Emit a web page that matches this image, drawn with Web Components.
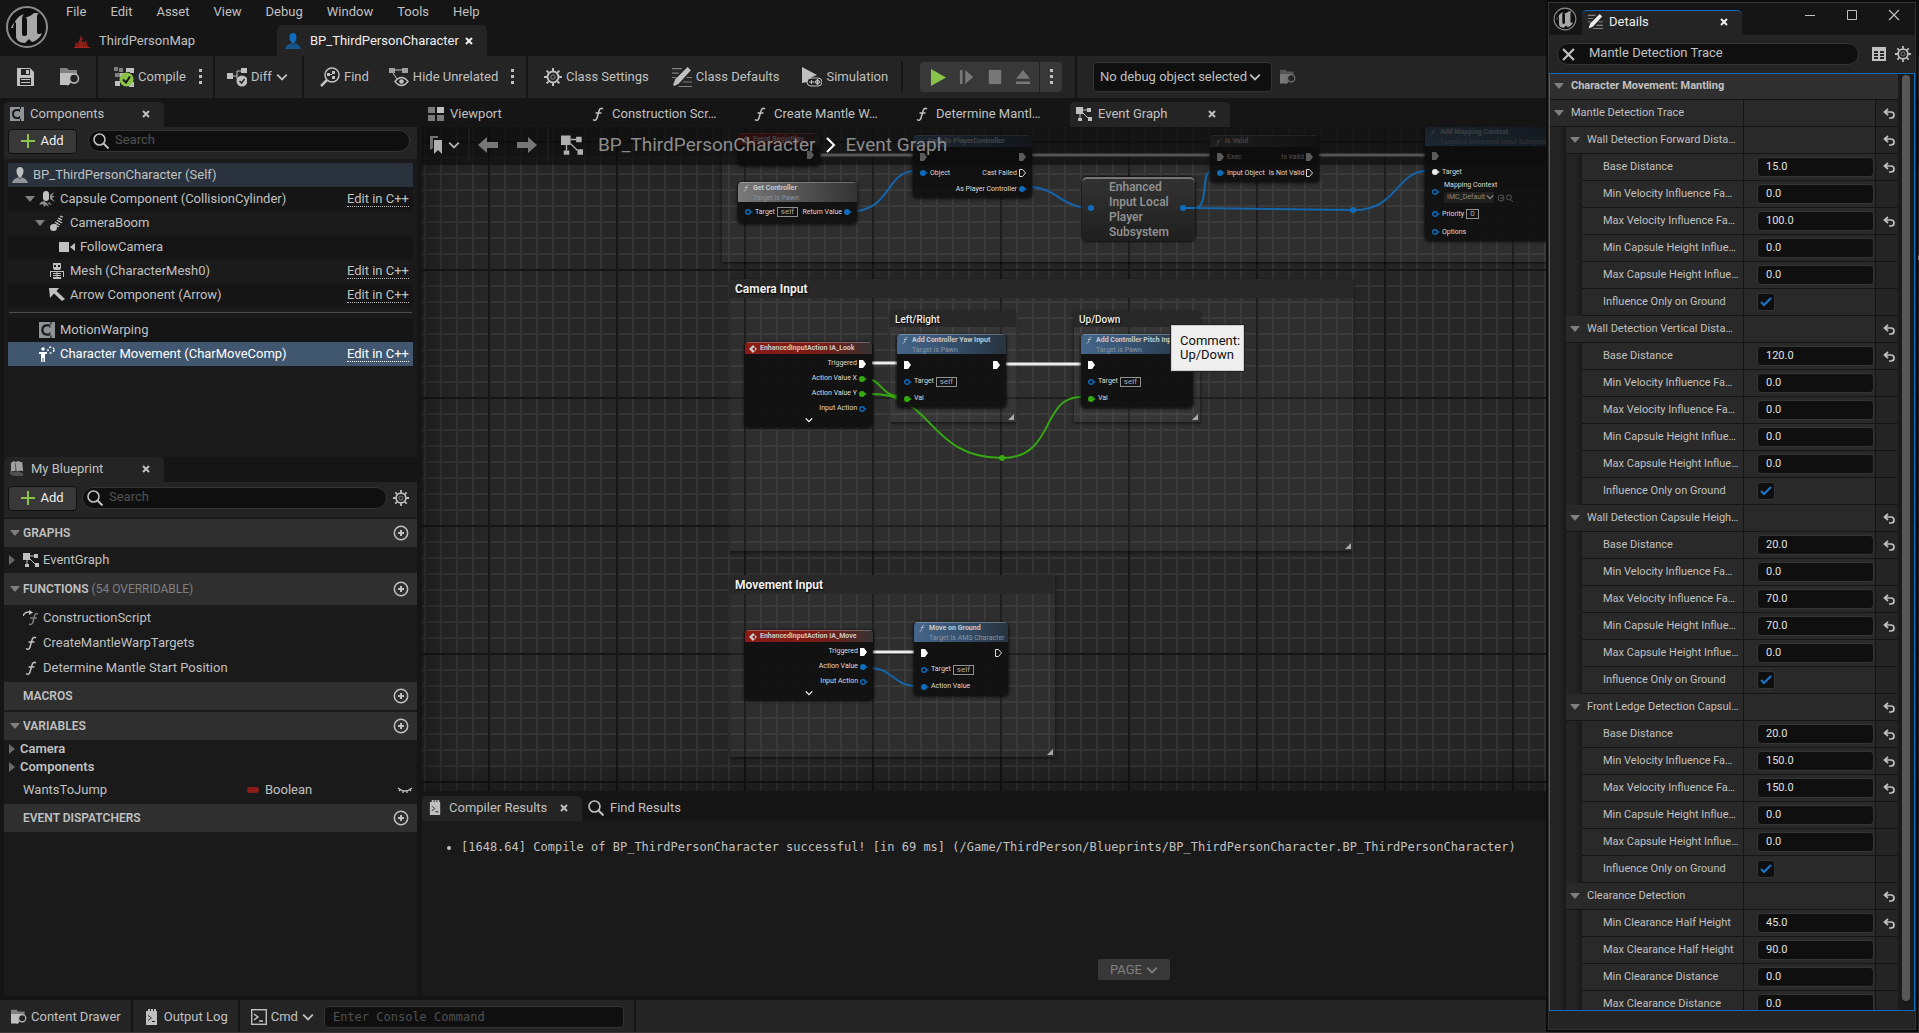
<!DOCTYPE html>
<html lang="en">
<head>
<meta charset="utf-8">
<title>BP_ThirdPersonCharacter</title>
<style>
  html, body { height: 100%; }
  body {
    margin: 0;
    overflow: hidden;
    background: #151515;
    color: #c0c0c0;
    font: 13px/16px Roboto, "Liberation Sans", sans-serif;
    --panel: #1a1a1a;
    --header: #242424;
    --line: #151515;
    --blue: #0f6cbd;
  }
</style>
</head>
<body>
<bp-editor></bp-editor>

<script>
const ICONS = {
  logo: ['0 0 44 44', `<circle cx="22" cy="22" r="20" fill="#101010" stroke="#8c8c8c" stroke-width="2"/><path fill="#a8a8a8" d="M8 23c1-7 5-12 11-14-2 2-2 4-2 6v14c0 2 3 3 5 1V15c0-2-1-2-2-2 3-1 7-3 9-5h5c-2 1-2 3-2 5v14c0 2 2 3 5 1-2 5-6 8-10 9l-3-3-4 4c-6 0-9-3-9-7V18c0-2-3 0-5 5z"/>`],
  map: ['0 0 16 16', `<path fill="#8b1e16" d="M1 14 2 9l2 2 3-9 2 5 1 3 2-3 2 7z"/><path fill="#151515" d="M3 12h1v1H3zM8 7h1v2H8zM11 11h1v1h-1z"/><path fill="#a3271c" d="M0 14h16v1H0z"/>`],
  person: ['0 0 16 16', `<path d="M4.500 4C4.500 1.500 6 0 8 0s3.500 1.500 3.500 4c0 2-.8 4-1.800 5v1l-1.700 1-1.700-1V9c-1-1-1.800-3-1.800-5z"/><path opacity=".7" d="M6.300 10.500 8 12l1.700-1.500c3 .5 5.300 2 6.300 5.500H0c1-3.500 3.300-5 6.300-5.500z"/>`],
  save: ['0 0 18 18', `<path fill-rule="evenodd" d="M1 0h13l4 4v14H1zM5 1v6h9V1zM4 10v7h11v-7z"/><path d="M10 2h3v4h-3zM5 11h9v1H5zM5 14h9v1H5z"/>`],
  browse: ['0 0 20 18', `<path opacity=".6" d="M0 0h7l2 2h8v3H0z"/><path d="M0 5h17v1a6 6 0 0 0-7 9l-1 2H0z"/><circle cx="14" cy="10.500" r="4.500" fill="none" stroke="currentColor" stroke-width="1.500"/><path d="m10.500 13-3.500 4" stroke="currentColor" stroke-width="2"/>`],
  compile: ['0 0 20 20', `<path opacity=".6" d="M0 0h4v4H0zM5 1h4v4H5zM1 6h5v4H1z"/><path d="M12 1h4v4h-4zM16 1h4v5h-4zM6 6h4v4H6zM1 14h5v5H1zM15 15h5v5h-5z"/><circle cx="12.500" cy="12.500" r="7" fill="#8bc34a"/><path d="m9 12.500 3 3 4-6" fill="none" stroke="#151515" stroke-width="2"/>`],
  diff: ['0 0 20 20', `<path d="M0 6h6v6H0zM14 1h6v5h-6z"/><path d="M6 9h4V4h4M10 9v3" fill="none" stroke="currentColor"/><circle cx="15" cy="14" r="5.500"/><path d="m12.500 14 2 2 3-4" fill="none" stroke="#242424" stroke-width="1.500"/>`],
  find: ['0 0 20 20', `<circle cx="12" cy="8" r="7" fill="none" stroke="currentColor" stroke-width="1.500"/><path d="m7 13-6 6" stroke="currentColor" stroke-width="2.500"/><path d="M7 6h3v3H7zM12 4h3v3h-3zM12 9h3v3h-3zM10 7h2v1h-2z"/>`],
  hide: ['0 0 20 20', `<path opacity=".8" d="M0 1h6v5H0zM13 1h6v5h-6z"/><path d="M6 3h7M4 6l4 6" stroke="currentColor"/><path fill="#242424" stroke="currentColor" stroke-width="1.500" d="M6 14.500q6.500-8 13 0-6.500 8-13 0z"/><circle cx="12.500" cy="14.500" r="2.300"/>`],
  gear: ['0 0 18 18', `<circle cx="9" cy="9" r="5.500" fill="none" stroke="currentColor" stroke-width="2"/><circle cx="9" cy="9" r="2.200" fill="none" stroke="currentColor" opacity=".6"/><path stroke="currentColor" stroke-width="2" d="M9 0v3M9 15v3M0 9h3M15 9h3M2.600 2.600l2 2M13.400 13.400l2 2M2.600 15.400l2-2M13.400 4.600l2-2"/>`],
  defaults: ['0 0 18 18', `<path opacity=".6" d="M0 1h9v1H0zM0 5h6v1H0zM0 9h4v1H0zM13 9h5v1h-5zM10 13h8v1h-8zM6 17h12v1H6z"/><path d="M14 0 17 3 6 15l-4 2-1-1 2-5z"/>`],
  sim: ['0 0 20 20', `<path d="M0 0l15 8-5 2-4 5-6 1z"/><rect x="5" y="11" width="15" height="8" rx="4" fill="#242424" stroke="currentColor"/><circle cx="15.500" cy="15" r="2" fill="none" stroke="currentColor"/><path d="M7 15h5M9.500 13v4M15.500 12v6M12.500 15h6" stroke="currentColor"/>`],
  play: ['0 0 16 18', `<path fill="#8bc34a" d="M0 0l16 9-16 9z"/>`],
  step: ['0 0 16 18', `<path d="M0 1h3v16H0zM6 1l9 8-9 8z"/>`],
  stop: ['0 0 16 18', `<path d="M1 1h14v16H1z"/>`],
  eject: ['0 0 16 18', `<path d="M8 1l8 10H0zM0 14h16v3H0z"/>`],
  dots: ['0 0 4 16', `<path d="M1 0h3v3H1zM1 6h3v3H1zM1 12h3v3H1z"/>`],
  chevron: ['0 0 10 10', `<path d="M1 3l4 4 4-4" fill="none" stroke="currentColor" stroke-width="1.500"/>`],
  close: ['0 0 8 8', `<path d="M1 1l6 6M7 1 1 7" stroke="currentColor" stroke-width="2"/>`],
  comp: ['0 0 14 14', `<path fill="#8f9496" d="M0 0h14v14H0z"/><path d="M9 3H7Q3 3 3 7t4 4h2" fill="none" stroke="#1a1a1a" stroke-width="2"/><path fill="#1a1a1a" d="M9 2h1v3H9zM9 9h1v3H9zM10 0h1v2h-1zM10 12h1v2h-1z"/>`],
  plus: ['0 0 14 14', `<path fill="#8bc34a" d="M6 0h2v6h6v2H8v6H6V8H0V6h6z"/>`],
  search: ['0 0 16 16', `<circle cx="6.500" cy="6.500" r="5.500" fill="none" stroke="currentColor" stroke-width="1.600"/><path d="m10.500 10.500 5 5" stroke="currentColor" stroke-width="2"/>`],
  capsule: ['0 0 16 16', `<rect x="4" y="0" width="6" height="10" rx="3"/><path opacity=".7" d="M0 14l2-3 3-1 3 2 2 4-3-2-2 2-1-3zM11 4l4-3-2 4 3 0-3 2 3 4-5-3zM10 11l3 3-4-1z"/>`],
  boom: ['0 0 16 16', `<circle cx="4.500" cy="12.500" r="3.500"/><path d="m5 9 5 3M6 7l5 3M8 5l5 3M9 3l4 2M11 1l3 1" fill="none" stroke="currentColor" stroke-width="1.300"/><path d="M7 10 13 1" stroke="currentColor" opacity=".6"/>`],
  camera: ['0 0 16 16', `<path d="M0 3h10v10H0zM11 8l5-4v8z"/>`],
  mesh: ['0 0 16 16', `<path fill-rule="evenodd" d="M4 0h8v5l-1 2H5L4 5zM5 2v2h2V2zM9 2v2h2V2z"/><path d="M1 8h14v1H1zM1 8h1v6H1zM14 8h1v6h-1zM7.500 8h1v8h-1zM4 10h8v1H4zM4 12h8v1H4zM4 14h8v2H4z"/>`],
  arrow: ['0 0 16 16', `<path d="M0 1h10L7.500 4 16 12l-3 2-8-7.500L1 11z"/>`],
  charmove: ['0 0 16 16', `<circle cx="4" cy="3" r="1.800"/><path d="M0 6h8v2H6v8H4.500v-4h-1v4H2V8H0z"/><circle cx="12" cy="4" r="3" fill="none" stroke="currentColor" stroke-dasharray="2 2" stroke-width="1.500"/>`],
  book: ['0 0 16 16', `<path fill="#a0a0a0" d="M1 2l3-2 2 1 3-1 2 1 2 0 1 10-3-1-2 1-3-1-2 1-3 0z"/><path fill="#505050" d="M0 10l4 2 4-1 6 2v3H4l-4-2zM5 2l1 8h1L6 2z"/>`],
  graph: ['0 0 16 16', `<path d="M0 1h7v7H0zM11 2h4v4h-4zM2 12h4v3H2zM12 11h4v4h-4z"/><path d="M7 4h4M4 8v4M7 7l5 5" stroke="currentColor" fill="none"/>`],
  func: ['0 0 12 16', `<path d="M11 3C9 1.500 7.500 3 7 5L5 12c-.5 2-2 3-4 1.500M3.500 7h6" fill="none" stroke="currentColor" stroke-width="1.500"/>`],
  cfunc: ['0 0 16 16', `<path d="M0 6c1-3 4-4 6-4" fill="none" stroke="currentColor" stroke-width="1.500"/><path d="M6 0l4 2.500L6 5z"/><path opacity=".6" d="M15 4c-2-1-3 0-3.500 2L10 12c-.5 2-2 3-4 2M7 8h7" fill="none" stroke="currentColor" stroke-width="1.500"/>`],
  viewport: ['0 0 16 14', `<path opacity=".6" d="M0 0h7v6H0zM0 8h7v6H0zM9 8h7v6H9z"/><path d="M9 0h7v6H9z"/>`],
  add: ['0 0 16 16', `<circle cx="8" cy="8" r="6.700" fill="none" stroke="currentColor" stroke-width="1.500"/><path d="M7 5h2v2h2v2H9v2H7V9H5V7h2z"/>`],
  eye: ['0 0 16 16', `<path d="M1 6q7 6 14 0M2 9l1-1M6 11V9M10 11V9M14 9l-1-1" fill="none" stroke="currentColor" stroke-width="1.300"/>`],
  log: ['0 0 16 16', `<path fill-rule="evenodd" d="M2 2h2V0h2v2h1V0h2v2h1V0h2v2h1v14H2zM4 6v1l3 2-3 2v1l4-3zM8 12v1h3v-1z"/>`],
  cmd: ['0 0 16 16', `<rect x=".7" y=".7" width="14.600" height="14.600" fill="none" stroke="currentColor" stroke-width="1.400"/><path d="m3 5 4 3-4 3M8 12h4" fill="none" stroke="currentColor" stroke-width="1.400"/>`],
  bookmark: ['0 0 12 18', `<path opacity=".6" d="M0 0h8v2H3v10l-3 2z"/><path d="M4 4h8v14l-4-4-4 4z"/>`],
  back: ['0 0 20 16', `<path d="M0 8l9-8v5h11v6H9v5z"/>`],
  forward: ['0 0 20 16', `<path d="M20 8l-9-8v5H0v6h11v5z"/>`],
  crumb: ['0 0 10 16', `<path d="M1 1l7 7-7 7" fill="none" stroke="#fff" stroke-width="2"/>`],
  min: ['0 0 12 12', `<path d="M1 6h10v1H1z"/>`],
  max: ['0 0 12 12', `<path d="M1.500 1.500h9v9h-9z" fill="none" stroke="currentColor"/>`],
  x: ['0 0 12 12', `<path d="M1 1l10 10M11 1 1 11" stroke="currentColor" stroke-width="var(--w, 1.200)"/>`],
  table: ['0 0 14 14', `<path fill-rule="evenodd" d="M0 0h14v14H0zM2 4v2h4V4zM8 4v2h4V4zM2 7v2h4V7zM8 7v2h4V7zM2 10v2h4v-2zM8 10v2h4v-2z"/>`],
  reset: ['0 0 12 12', `<path d="M5 1 1.500 4 5 7M2 4h6q3 0 3 3t-3 3H6" fill="none" stroke="currentColor" stroke-width="1.700"/>`],
  down: ['0 0 10 6', `<path fill="#808080" d="M0 0h10L5 6z"/>`],
  right: ['0 0 6 10', `<path fill="#6a6a6a" d="M0 0l6 5-6 5z"/>`],
  event: ['0 0 8 8', `<path d="M4 0l4 4-4 4-4-4z"/><path fill="#8b1a14" d="M3 4l3-2v4z"/>`],
  asset: ['0 0 18 8', `<g fill="none" stroke="#555"><circle cx="4" cy="4" r="3"/><path d="M6 4H3"/><circle cx="12" cy="3.500" r="2.500"/><path d="m14 6 2 2"/></g>`],
  grip: ['0 0 6 6', `<path d="M6 0v6H0z"/>`]
};

// Every element of the editor renders its own template once it is connected
class UiElement extends HTMLElement {
  connectedCallback() {
    if (this.shadowRoot) return;
    this.attachShadow({mode: 'open'}).innerHTML = `
      <style>
        * { box-sizing: border-box; }
        :host([hidden]) { display: none; }
        button, input, select { font: inherit; color: inherit; }
        button { border: 0; padding: 0; background: none; display: flex; align-items: center; }
      </style>` + this.render();
  }
  attr(name, other = '') {
    return this.hasAttribute(name) ? this.getAttribute(name) : other;
  }
}

class UiIcon extends UiElement {
  render() {
    const [box, shape] = ICONS[this.attr('name')];
    const w = this.attr('w', 16);
    const h = this.attr('h', w);
    return `
      <style>
        :host { display: inline-flex; flex: none; }
        svg { display: block; fill: currentColor; }
      </style>
      <svg width="${w}" height="${h}" viewBox="${box}" aria-hidden="true">${shape}</svg>`;
  }
}

// Tab with an icon; "active" lights it up and shows the close button
class UiTab extends UiElement {
  render() {
    return `
      <style>
        :host { display: flex; align-items: center; height: 25px; padding: 0 6px 2px; width: 160px; border-radius: 5px 5px 0 0; box-sizing: border-box; }
        :host([active]) { background: var(--header); }
        :host([big]) { height: 31px; padding: 0 8px; width: 210px; }
        .tab { flex: 1; gap: 6px; white-space: nowrap; text-align: left; }
        :host([big]) .tab { gap: 9px; }
        :host([big][active]) { color: #eee; }
        .close { padding: 4px 8px; }
        :host([big]) .close { padding: 4px 6px 4px 0; }
      </style>
      <button class="tab" role="tab"><slot name="icon"></slot><span><slot></slot></span></button>
      ${this.hasAttribute('active') ? '<button class="close" aria-label="Close tab"><ui-icon name="close" w="8"></ui-icon></button>' : ''}`;
  }
}

class UiTool extends UiElement {
  render() {
    const size = this.attr('size', 20);
    return `
      <style>
        :host { display: flex; }
        button { gap: 4px; white-space: nowrap; }
      </style>
      <button aria-label="${this.attr('label')}">
        ${this.hasAttribute('icon') ? `<ui-icon name="${this.attr('icon')}" w="${size}"></ui-icon>` : ''}
        <slot></slot>
        ${this.hasAttribute('menu') ? '<ui-icon name="chevron" w="12"></ui-icon>' : ''}
      </button>`;
  }
}

class UiSearch extends UiElement {
  render() {
    return `
      <style>
        :host { display: block; flex: 1; min-width: 0; }
        label { display: flex; align-items: center; gap: var(--gap, 6px); height: 22px; padding: 0 5px 0 4px; border: 1px solid #343434; border-radius: 11px; background: #0f0f0f; }
        input { flex: 1; min-width: 0; border: 0; padding: 0 0 2px; background: none; outline: 0; }
        input::placeholder { color: #505050; opacity: 1; }
        ui-icon { --w: 2; }
      </style>
      <label><ui-icon name="${this.attr('icon', 'search')}" w="${this.attr('size', 16)}"></ui-icon>
      <input aria-label="Search" placeholder="Search" value="${this.attr('value')}"></label>`;
  }
}

class UiAdd extends UiElement {
  render() {
    return `
      <style>
        :host { display: block; }
        button { gap: 5px; width: 69px; height: 25px; justify-content: center; color: #eee; background: #383838; border: 1px solid #0f0f0f; border-radius: 4px; }
      </style>
      <button><ui-icon name="plus" w="14"></ui-icon>Add</button>`;
  }
}

class TreeRow extends UiElement {
  render() {
    return `
      <style>
        :host { display: flex; align-items: center; height: 24px; gap: 5px; padding: 0 4px 0 calc(4px + var(--depth, 0px)); white-space: nowrap; background: #151515; }
        :host([alt]) { background: #1a1a1a; }
        :host([self]) { background: #2a333d; }
        :host([selected]) { background: #40576f; color: #fff; }
        .twist { width: 10px; display: flex; margin-right: -1px; }
        .name { flex: 1; }
        a { color: inherit; text-decoration: none; line-height: 14px; border-bottom: 1px dotted currentColor; }
      </style>
      ${this.hasAttribute('self') ? '' : `<span class="twist">${this.hasAttribute('open') ? '<ui-icon name="down" w="10" h="6"></ui-icon>' : ''}</span>`}
      <ui-icon name="${this.attr('icon')}" w="${this.attr('size', 16)}"></ui-icon>
      <span class="name"><slot></slot></span>
      ${this.hasAttribute('cpp') ? '<a href="#cpp">Edit in C++</a>' : ''}`;
  }
}

class BpSection extends UiElement {
  render() {
    return `
      <style>
        :host { display: block; }
        header { display: flex; align-items: center; height: var(--h, 28px); padding: 0 8px 0 6px; gap: 3px; background: #2f2f2f; font-size: 12px; }
        b { font-weight: 600; }
        i { font-style: normal; color: #808080; flex: 1; }
        .twist { width: 10px; display: flex; }
      </style>
      <header>
        <span class="twist">${this.hasAttribute('open') ? '<ui-icon name="down" w="10" h="6"></ui-icon>' : ''}</span>
        <b>${this.attr('name')}</b><i>${this.attr('note')}</i>
        <button aria-label="Add to ${this.attr('name')}"><ui-icon name="add" w="16"></ui-icon></button>
      </header>
      <slot></slot>`;
  }
}

class BpItem extends UiElement {
  render() {
    return `
      <style>
        :host { display: flex; align-items: center; gap: 4px; height: 25px; padding: 0 4px 0 5px; white-space: nowrap; }
        .twist { width: 10px; display: flex; }
        :host([bold]) { height: 18px; font-weight: 600; gap: 1px; }
      </style>
      <span class="twist">${this.hasAttribute('closed') ? '<ui-icon name="right" w="6" h="10"></ui-icon>' : ''}</span>
      <slot></slot>`;
  }
}

class ComponentsPanel extends UiElement {
  render() {
    return `
      <style>
        :host { display: flex; flex-direction: column; height: 355px; }
        .bar { display: flex; align-items: center; gap: 11px; height: 32px; padding: 0 7px 4px 4px; background: var(--header); }
        .body { flex: 1; background: var(--panel); padding: 4px 4px 0; }
        hr { margin: 5px 1px; border: 0; height: 1px; background: #4c4c4c; }
      </style>
      <ui-tab active><ui-icon slot="icon" name="comp" w="14"></ui-icon>Components</ui-tab>
      <div class="bar"><ui-add></ui-add><ui-search></ui-search></div>
      <div class="body">
        <tree-row self icon="person">BP_ThirdPersonCharacter (Self)</tree-row>
        <tree-row open icon="capsule" cpp style="--depth: 13px">Capsule Component (CollisionCylinder)</tree-row>
        <tree-row alt open icon="boom" style="--depth: 23px">CameraBoom</tree-row>
        <tree-row icon="camera" style="--depth: 33px">FollowCamera</tree-row>
        <tree-row alt icon="mesh" cpp style="--depth: 23px">Mesh (CharacterMesh0)</tree-row>
        <tree-row icon="arrow" cpp style="--depth: 23px">Arrow Component (Arrow)</tree-row>
        <hr>
        <tree-row icon="comp" style="--depth: 13px">MotionWarping</tree-row>
        <tree-row selected icon="charmove" cpp style="--depth: 13px">Character Movement (CharMoveComp)</tree-row>
      </div>`;
  }
}

class BlueprintPanel extends UiElement {
  render() {
    return `
      <style>
        :host { display: flex; flex-direction: column; flex: 1; min-height: 0; }
        .bar { display: flex; align-items: center; gap: 5px; height: 35px; padding: 0 8px 3px 4px; background: var(--header); }
        .bar ui-icon { margin-left: 1px; }
        .body { flex: 1; background: var(--panel); padding-top: 2px; }
        .list { padding-bottom: 2px; }
        .var { flex: 1; display: flex; align-items: center; }
        .var span { flex: 1; }
        .var i { width: 12px; height: 6px; border-radius: 3px; background: #8b1e16; margin-right: 6px; }
        .type { width: 132px; }
        .gap { height: 2px; }
      </style>
      <ui-tab active><ui-icon slot="icon" name="book" w="15"></ui-icon>My Blueprint</ui-tab>
      <div class="bar"><ui-add></ui-add><ui-search></ui-search>
        <button aria-label="Settings"><ui-icon name="gear" w="16"></ui-icon></button></div>
      <div class="body">
        <bp-section open name="GRAPHS">
          <bp-item closed style="height: 26px"><ui-icon name="graph" w="16"></ui-icon>EventGraph</bp-item>
        </bp-section>
        <bp-section open name="FUNCTIONS" note="(54 OVERRIDABLE)" style="--h: 32px">
          <div class="list">
            <bp-item><ui-icon name="cfunc" w="16"></ui-icon>ConstructionScript</bp-item>
            <bp-item><ui-icon name="func" w="16"></ui-icon>CreateMantleWarpTargets</bp-item>
            <bp-item><ui-icon name="func" w="16"></ui-icon>Determine Mantle Start Position</bp-item>
          </div>
        </bp-section>
        <bp-section name="MACROS"></bp-section>
        <div class="gap"></div>
        <bp-section open name="VARIABLES">
          <bp-item bold closed>Camera</bp-item>
          <bp-item bold closed>Components</bp-item>
          <bp-item style="height: 28px"><div class="var"><span>WantsToJump</span><i></i><div class="type">Boolean</div><button aria-label="Toggle visibility"><ui-icon name="eye" w="16"></ui-icon></button></div></bp-item>
        </bp-section>
        <bp-section name="EVENT DISPATCHERS"></bp-section>
      </div>`;
  }
}

const PIN_SHAPES = {
  exec: '<path fill="#fff" d="M0 0h4l3 4-3 4H0z"/>',
  'exec-o': '<path fill="none" stroke="#ddd" d="M.5.5h3l3 3.500-3 3.500h-3z"/>',
  dot: '<circle cx="3" cy="4" r="3"/><path d="M6 3l2 1-2 1z"/>',
  ring: '<circle cx="3" cy="4" r="2.300" fill="none" stroke="currentColor" stroke-width="1.400"/><path d="M6 3l2 1-2 1z"/>'
};
const PIN_COLORS = {blue: '#0f6cbd', green: '#35a910', white: '#eee', exec: '#fff'};

// One line of a node: an input on the left, an output on the right.
// in / out hold the pin as "shape color", in-label / out-label the text.
class NodeRow extends UiElement {
  pin(value) {
    if (!value) return '';
    const [shape, color = 'exec'] = value.split(' ');
    return `<svg width="8" height="8" viewBox="0 0 8 8" style="color: ${PIN_COLORS[color]}" fill="currentColor">${PIN_SHAPES[shape]}</svg>`;
  }
  render() {
    return `
      <style>
        :host { display: flex; align-items: center; height: var(--row, 17px); padding: 0 5px 0 7px; gap: 2px; font-size: 7px; line-height: 9px; color: #ddd; white-space: nowrap; }
        svg { flex: none; display: block; }
        .space { flex: 1; }
        .box { border: 1px solid #909090; padding: 0 3px; color: #aaa; height: 10px; line-height: 8px; font-size: 8px; }
      </style>
      ${this.pin(this.attr('in'))}<span>${this.attr('in-label')}</span>
      ${this.hasAttribute('box') ? `<span class="box">${this.attr('box')}</span>` : ''}
      <slot></slot><span class="space"></span>
      <span>${this.attr('out-label')}</span>${this.pin(this.attr('out'))}`;
  }
}

class GraphNode extends UiElement {
  render() {
    this.style.cssText += `left:${this.attr('x')}px;top:${this.attr('y')}px;width:${this.attr('w')}px;min-height:${this.attr('h')}px`;
    const colors = {event: '#8b1a14, #7a1b16 60%, #333', func: '#45668a, #34506e 50%, #27323d', pure: '#7a7a7a, #555 50%, #333', plain: '#484848, #333 60%, #222'};
    return `
      <style>
        :host { position: absolute; display: flex; flex-direction: column; box-sizing: border-box; background: #101010ee; border-radius: 4px; box-shadow: 0 1px 3px 1px #000a; overflow: hidden; }
        header { flex: none; padding: 0 4px; height: ${this.hasAttribute('sub') ? 20 : 12}px; background: linear-gradient(90deg, ${colors[this.attr('kind', 'func')]}); border-top: 1px solid #ffffff44; display: grid; grid-template-columns: 8px 1fr; column-gap: 3px; align-items: center; font-size: 7px; line-height: 9px; color: #c8c8c8; white-space: nowrap; }
        b { font-weight: 700; }
        small { grid-column: 2; font-size: 7px; line-height: 8px; color: #8a949c; }
        .body { padding-top: 2px; }
        footer { text-align: center; height: 10px; display: flex; justify-content: center; color: #fff; }
      </style>
      <header><ui-icon name="${this.attr('icon', 'func')}" w="8"></ui-icon><b>${this.attr('name')}</b>${this.hasAttribute('sub') ? `<small>${this.attr('sub')}</small>` : ''}</header>
      <div class="body"><slot></slot></div>
      ${this.hasAttribute('more') ? '<footer><ui-icon name="chevron" w="8"></ui-icon></footer>' : ''}`;
  }
}

class CompactNode extends UiElement {
  render() {
    this.style.cssText += `left:${this.attr('x')}px;top:${this.attr('y')}px;width:${this.attr('w')}px`;
    return `
      <style>
        :host { position: absolute; display: block; box-sizing: border-box; padding: 1px 27px; white-space: nowrap; font: 600 12px/15px Roboto, sans-serif; color: #8f8f8f; background: linear-gradient(#333d, #1c1c1cdd); border-top: 2px solid #777; border-radius: 5px; box-shadow: 0 0 2px 1px #000a; }
      </style>
      <slot></slot>`;
  }
}

class GraphComment extends UiElement {
  render() {
    this.style.cssText += `left:${this.attr('x')}px;top:${this.attr('y')}px;width:${this.attr('w')}px;height:${this.attr('h')}px`;
    return `
      <style>
        :host { position: absolute; display: flex; flex-direction: column; justify-content: space-between; box-sizing: border-box; background: #ffffff0a; box-shadow: 0 1px 3px #000a; }
        header { background: #282828; color: #eee; font: 700 12px/18px Roboto, sans-serif; padding: 1px 5px 0; text-shadow: 1px 1px 1px #000; }
        :host([small]) header { font-size: 10px; line-height: 15px; font-weight: 500; }
        ui-icon { align-self: flex-end; padding: 2px; color: #aaa; }
      </style>
      <header><slot></slot></header>
      <ui-icon name="grip" w="6"></ui-icon>`;
  }
}

class EventGraph extends UiElement {
  render() {
    return `
      <style>
        :host {
          display: block; position: relative; overflow: hidden; flex: 1; min-height: 0;
          background:
            linear-gradient(90deg, #161616 2px, transparent 2px) 66px 0 / 128px 128px,
            linear-gradient(#161616 2px, transparent 2px) 0 14px / 128px 128px,
            linear-gradient(90deg, #343434 2px, transparent 2px) 2px 0 / 16px 16px,
            linear-gradient(#343434 2px, transparent 2px) 0 14px / 16px 16px,
            #262626;
        }
        .shade { position: absolute; inset: 0; box-shadow: inset 0 0 50px #0008; }
        .wires { position: absolute; inset: 0; width: 100%; height: 100%; fill: none; stroke-width: 2; }
        .bar { position: absolute; inset: 0 0 auto; height: 38px; display: flex; align-items: center; padding: 0 8px 2px; background: #0c0c0ca8; color: #b0b0b0; }
        .bar button { height: 30px; }
        .bar i { width: 2px; height: 34px; background: #1c1c1c; }
        .path { font-size: 19px; line-height: 22px; color: #8c8c8c; }
        .mark { gap: 6px; margin-right: 8px; }
        .nav { gap: 19px; display: flex; margin: 0 10px 0 8px; color: #777; }
        .crumb { margin: 0 10px; }
        .tip { position: absolute; left: 749px; top: 198px; width: 73px; padding: 8px; box-sizing: border-box; background: #efefef; color: #111; line-height: 14px; border: 1px solid #ccc; box-shadow: 0 0 0 1px #222; }
        .asset { display: flex; flex-direction: column; gap: 2px; }
        .pick { display: flex; gap: 3px; align-items: center; }
        .pick span { background: #202020; color: #888; padding: 1px 0 1px 3px; display: flex; gap: 1px; }
      </style>
      <graph-comment x="300" y="-60" w="1200" h="195"></graph-comment>
      <graph-comment x="308" y="152" w="623" h="272">Camera Input</graph-comment>
      <graph-comment x="308" y="448" w="325" h="182">Movement Input</graph-comment>
      <graph-comment small x="468" y="184" w="126" h="111">Left/Right</graph-comment>
      <graph-comment small x="652" y="184" w="126" h="111">Up/Down</graph-comment>

      <svg class="wires" aria-hidden="true">
        <g stroke="#eee" stroke-width="3"><path d="M398 28h93M610 28h178M897 28h106M450 236h25M583 237h76M450 525h42"/></g>
        <g stroke="#1565ad"><path d="M435 84C468 80 465 46 491 44M610 60C636 62 640 81 669 81M773 81c14 0 6-36 15-36M773 81l158 2C974 84 974 46 1003 44M450 541c18 0 24 18 42 18"/></g>
        <g stroke="#35a910"><path d="M450 253c8 2 13 16 25 16M450 267c62 0 56 64 130 64 54 0 38-61 79-61"/></g>
        <circle cx="931" cy="83" r="3" fill="#0f6cbd"/><circle cx="580" cy="331" r="3" fill="#35a910"/>
      </svg>

      <graph-node kind="event" icon="event" x="316" y="6" w="82" h="32" name="Event BeginPlay">
        <node-row out="exec" style="--row: 15px"></node-row>
      </graph-node>
      <graph-node kind="pure" x="316" y="55" w="119" h="41" name="Get Controller" sub="Target is Pawn">
        <node-row in="ring blue" in-label="Target" box="self" out="dot blue" out-label="Return Value" style="--row: 16px"></node-row>
      </graph-node>
      <graph-node x="491" y="8" w="119" h="61" name="Cast To PlayerController" style="--row: 16px">
        <node-row in="exec" out="exec"></node-row>
        <node-row in="dot blue" in-label="Object" out="exec-o" out-label="Cast Failed"></node-row>
        <node-row out="dot blue" out-label="As Player Controller"></node-row>
      </graph-node>
      <compact-node x="660" y="50" w="113">Enhanced<br>Input Local<br>Player<br>Subsystem</compact-node>
      <svg class="wires" aria-hidden="true"><g fill="#0f6cbd"><circle cx="669" cy="81" r="3"/><circle cx="761" cy="81" r="3"/></g><path stroke="#0f6cbd" d="M761 81h12"/></svg>
      <graph-node kind="plain" x="788" y="8" w="109" h="46" name="Is Valid" style="--row: 16px">
        <node-row in="exec" in-label="Exec" out="exec" out-label="Is Valid"></node-row>
        <node-row in="dot blue" in-label="Input Object" out="exec-o" out-label="Is Not Valid"></node-row>
      </graph-node>
      <graph-node x="1003" y="-1" w="170" h="113" name="Add Mapping Context" sub="Target is Enhanced Input Subsystem Interface" style="--row: 16px">
        <node-row in="exec"></node-row>
        <node-row in="dot white" in-label="Target"></node-row>
        <node-row in="ring blue" style="--row: 24px"><div class="asset">Mapping Context<div class="pick"><span>IMC_Default <ui-icon name="chevron" w="8"></ui-icon></span><ui-icon name="asset" w="18" h="8"></ui-icon></div></div></node-row>
        <node-row in="ring blue" in-label="Priority" box="0" style="--row: 20px"></node-row>
        <node-row in="ring blue" in-label="Options"></node-row>
      </graph-node>

      <graph-node kind="event" icon="event" more x="323" y="215" w="127" h="85" name="EnhancedInputAction IA_Look" style="--row: 15px">
        <node-row out="exec" out-label="Triggered"></node-row>
        <node-row out="dot green" out-label="Action Value X"></node-row>
        <node-row out="dot green" out-label="Action Value Y"></node-row>
        <node-row out="ring blue" out-label="Input Action"></node-row>
      </graph-node>
      <graph-node x="475" y="207" w="109" h="72" name="Add Controller Yaw Input" sub="Target is Pawn">
        <node-row in="exec" out="exec"></node-row>
        <node-row in="ring blue" in-label="Target" box="self"></node-row>
        <node-row in="dot green" in-label="Val"></node-row>
      </graph-node>
      <graph-node x="659" y="207" w="112" h="72" name="Add Controller Pitch Input" sub="Target is Pawn">
        <node-row in="exec" out="exec"></node-row>
        <node-row in="ring blue" in-label="Target" box="self"></node-row>
        <node-row in="dot green" in-label="Val"></node-row>
      </graph-node>
      <graph-node kind="event" icon="event" more x="323" y="503" w="128" h="70" name="EnhancedInputAction IA_Move" style="--row: 15px">
        <node-row out="exec" out-label="Triggered"></node-row>
        <node-row out="dot blue" out-label="Action Value"></node-row>
        <node-row out="ring blue" out-label="Input Action"></node-row>
      </graph-node>
      <graph-node x="492" y="495" w="94" h="72" name="Move on Ground" sub="Target is AMS Character">
        <node-row in="exec" out="exec-o"></node-row>
        <node-row in="ring blue" in-label="Target" box="self"></node-row>
        <node-row in="dot blue" in-label="Action Value"></node-row>
      </graph-node>

      <div class="shade"></div>
      <div class="bar">
        <button class="mark" aria-label="Bookmarks"><ui-icon name="bookmark" w="12" h="18"></ui-icon><ui-icon name="chevron" w="12"></ui-icon></button>
        <i></i>
        <div class="nav"><button aria-label="Back"><ui-icon name="back" w="20" h="16"></ui-icon></button><button aria-label="Forward"><ui-icon name="forward" w="20" h="16"></ui-icon></button></div>
        <i></i>
        <ui-icon name="graph" w="22" style="margin: 0 15px 0 12px"></ui-icon>
        <span class="path">BP_ThirdPersonCharacter</span>
        <ui-icon class="crumb" name="crumb" w="10" h="16"></ui-icon>
        <span class="path">Event Graph</span>
      </div>
      <div class="tip" role="tooltip">Comment:<br>Up/Down</div>`;
  }
}

class CompilerResults extends UiElement {
  render() {
    return `
      <style>
        :host { display: flex; flex-direction: column; height: 205px; }
        .tabs { display: flex; align-items: flex-end; height: 30px; }
        .body { flex: 1; background: var(--panel); padding: 17px 96px 16px 23px; display: flex; flex-direction: column; justify-content: space-between; }
        ul { margin: 0; padding: 0 0 0 16px; font: 12px/18px "DejaVu Sans Mono", monospace; white-space: nowrap; }
        .page { align-self: center; gap: 4px; height: 21px; padding: 0 12px; border-radius: 2px; background: #383838; color: #808080; }
      </style>
      <div class="tabs">
        <ui-tab active><ui-icon slot="icon" name="log" w="15"></ui-icon>Compiler Results</ui-tab>
        <ui-tab><ui-icon slot="icon" name="search" w="16"></ui-icon>Find Results</ui-tab>
      </div>
      <div class="body">
        <ul><li>[1648.64] Compile of BP_ThirdPersonCharacter successful! [in 69 ms] (/Game/ThirdPerson/Blueprints/BP_ThirdPersonCharacter.BP_ThirdPersonCharacter)</li></ul>
        <button class="page">PAGE<ui-icon name="chevron" w="12"></ui-icon></button>
      </div>`;
  }
}

class EditorToolbar extends UiElement {
  render() {
    return `
      <style>
        :host { display: flex; align-items: center; height: 42px; background: var(--header); }
        .group { display: flex; align-items: center; height: 100%; border-right: 2px solid var(--line); box-sizing: border-box; }
        .play { display: flex; align-items: center; height: 30px; border-radius: 4px; background: #383838; margin: 0 13px 0 17px; color: #777; }
        .play > div { display: flex; gap: 12px; padding: 0 8px 0 10px; }
        .play > .more { padding: 0 9px; height: 100%; border-left: 1px solid #242424; color: #c0c0c0; }
        .debug { display: grid; align-items: center; width: 179px; height: 30px; margin: 0 8px 0 16px; }
        .debug > * { grid-area: 1 / 1; }
        .debug ui-icon { justify-self: end; margin-right: 11px; pointer-events: none; }
        select { appearance: none; width: 100%; height: 100%; padding: 0 6px; border: 1px solid #343434; border-radius: 4px; background: #0f0f0f; }
        .short { height: 30px; border-right: 2px solid var(--line); }
      </style>
      <div class="group" style="padding: 0 16px; gap: 26px; width: 98px">
        <ui-tool icon="save" size="18" label="Save"></ui-tool><ui-tool icon="browse" label="Browse"></ui-tool>
      </div>
      <div class="group" style="padding-left: 16px; gap: 12px; width: 117px">
        <ui-tool icon="compile" label="Compile">Compile</ui-tool><ui-tool label="Compile options"><ui-icon name="dots" w="4" h="16"></ui-icon></ui-tool>
      </div>
      <div class="group" style="padding-left: 12px; width: 89px"><ui-tool icon="diff" label="Diff" menu>Diff</ui-tool></div>
      <div class="group" style="padding-left: 16px; gap: 20px; width: 224px">
        <ui-tool icon="find" label="Find">Find</ui-tool><ui-tool icon="hide" label="Hide Unrelated">Hide Unrelated</ui-tool>
        <ui-tool label="Hide options" style="margin-left: -8px"><ui-icon name="dots" w="4" h="16"></ui-icon></ui-tool>
      </div>
      <div style="display: flex; padding-left: 16px; gap: 23px; width: 373px">
        <ui-tool icon="gear" size="18" label="Class Settings">Class Settings</ui-tool>
        <ui-tool icon="defaults" label="Class Defaults">Class Defaults</ui-tool>
        <ui-tool icon="sim" label="Simulation">Simulation</ui-tool>
      </div>
      <span class="short"></span>
      <div class="group">
        <div class="play">
          <div><ui-tool icon="play" size="17" label="Play"></ui-tool><ui-tool icon="step" size="16" label="Advance frame"></ui-tool><ui-tool icon="stop" size="16" label="Stop"></ui-tool><ui-tool icon="eject" size="16" label="Eject"></ui-tool></div>
          <button class="more" aria-label="Play options"><ui-icon name="dots" w="4" h="16"></ui-icon></button>
        </div>
      </div>
      <div class="debug"><select aria-label="Debug object"><option>No debug object selected</option></select><ui-icon name="chevron" w="12"></ui-icon></div>
      <ui-tool icon="browse" size="16" label="Browse to debug object" style="color: #777"></ui-tool>`;
  }
}

class StatusBar extends UiElement {
  render() {
    return `
      <style>
        :host { display: flex; align-items: center; height: 33px; background: var(--header); border-bottom: 1px solid #3a3638; }
        .cell { display: flex; align-items: center; height: 100%; padding: 1px 10px 0 11px; border-right: 2px solid var(--line); gap: 10px; }
        input { width: 300px; height: 22px; padding: 0 8px; border: 1px solid #343434; border-radius: 4px; background: #0f0f0f; font: 12px/16px "DejaVu Sans Mono", monospace; }
        input::placeholder { color: #505050; opacity: 1; }
      </style>
      <div class="cell"><ui-tool icon="browse" size="16" label="Content Drawer">Content Drawer</ui-tool></div>
      <div class="cell"><ui-tool icon="log" size="16" label="Output Log">Output Log</ui-tool></div>
      <div class="cell"><ui-tool icon="cmd" size="16" label="Cmd" menu>Cmd</ui-tool><input aria-label="Console" placeholder="Enter Console Command"></div>`;
  }
}

const DISTANCE_ROWS = ['Base Distance', 'Min Velocity Influence Fa…', 'Max Velocity Influence Fa…', 'Min Capsule Height Influe…', 'Max Capsule Height Influe…'];
// A star after the value marks one that differs from its default
const DETAILS = [
  ['Wall Detection Forward Dista…', ['15.0*', '0.0', '100.0*', '0.0', '0.0']],
  ['Wall Detection Vertical Dista…', ['120.0*', '0.0', '0.0', '0.0', '0.0']],
  ['Wall Detection Capsule Heigh…', ['20.0*', '0.0', '70.0*', '70.0*', '0.0']],
  ['Front Ledge Detection Capsul…', ['20.0*', '150.0*', '150.0*', '0.0', '0.0']]
];
const CLEARANCE = [['Min Clearance Half Height', '45.0*'], ['Max Clearance Half Height', '90.0'], ['Min Clearance Distance', '0.0'], ['Max Clearance Distance', '0.0']];

class PropertyRow extends UiElement {
  render() {
    const level = Number(this.attr('level', 2));
    const name = this.attr('name');
    let field = '';
    if (this.hasAttribute('value')) field = `<input id="f" type="text" value="${this.attr('value')}">`;
    if (this.hasAttribute('check')) field = '<span class="check"><input id="f" type="checkbox" checked><svg width="12" height="10" viewBox="0 0 12 10"><path d="M1 5l3 3 7-7" fill="none" stroke="#1a78cc" stroke-width="2"/></svg></span>';
    return `
      <style>
        :host { display: block; flex: none; }
        .row { display: flex; height: 27px; font-size: 11px; background: #292929; }
        .row > * { border-bottom: 1px solid var(--line); display: flex; align-items: center; }
        .row > .indent { width: 16px; border-bottom: 0; border-right: 2px solid #1a1a1a; background: linear-gradient(90deg, #242424 60%, #1d1d1d); }
        .name { flex: 1; min-width: 0; overflow: hidden; white-space: nowrap; gap: 7px; padding: 0 0 0 4px; border-right: 1px solid var(--line); }
        .value { width: 132px; padding-left: 13px; border-right: 1px solid var(--line); }
        .reset { width: 22px; padding: 1px 0 0 7px; background: #242424; }
        .leaf { padding-left: 21px; }
        input[type=text] { width: 117px; height: 20px; padding: 0 8px 1px; border: 1px solid #343434; border-radius: 4px; background: #0f0f0f; color: #e0e0e0; }
        .check { display: grid; place-items: center; }
        .check > * { grid-area: 1 / 1; pointer-events: none; }
        input[type=checkbox] { appearance: none; pointer-events: auto; margin: 0; width: 18px; height: 18px; border: 1px solid #343434; border-radius: 3px; background: #0f0f0f; }
      </style>
      <div class="row">
        ${'<span class="indent"></span>'.repeat(level)}
        ${field ? `<label class="name leaf" for="f">${name}</label>` : `<div class="name"><ui-icon name="down" w="10" h="6"></ui-icon>${name}</div>`}
        <div class="value">${field}</div>
        <div class="reset">${this.hasAttribute('changed') ? '<button aria-label="Reset to default"><ui-icon name="reset" w="12"></ui-icon></button>' : ''}</div>
      </div>`;
  }
}

class DetailsWindow extends UiElement {
  valueRow(name, value) {
    return `<property-row name="${name}" value="${value.replace('*', '')}" ${value.endsWith('*') ? 'changed' : ''}></property-row>`;
  }
  render() {
    const groups = DETAILS.map(([title, values]) => `
      <property-row level="1" name="${title}" changed></property-row>
      ${values.map((v, i) => this.valueRow(DISTANCE_ROWS[i], v)).join('')}
      <property-row name="Influence Only on Ground" check></property-row>`).join('');
    return `
      <style>
        :host { position: absolute; right: 3px; top: 2px; bottom: 3px; width: 368px; display: flex; flex-direction: column; box-sizing: border-box; border: 1px solid #333; background: var(--header); box-shadow: 0 0 0 2px #0c0c0c; }
        .title { display: flex; align-items: flex-end; height: 32px; padding: 0 15px 0 4px; background: #151515; }
        .title > ui-icon { align-self: center; margin-right: 5px; }
        ui-tab { border-top: 1px solid var(--blue); color: #eee; padding-bottom: 3px; }
        .win { flex: 1; align-self: flex-start; display: flex; justify-content: flex-end; gap: 30px; padding-top: 6px; }
        .find { display: flex; align-items: center; height: 38px; padding: 0 4px 0 8px; gap: 9px; }
        .find ui-search { margin-right: 4px; --gap: 14px; }
        .frame { flex: 1; min-height: 0; display: flex; border: 1px solid var(--blue); background: #1a1a1a; }
        .rows { flex: 1; overflow: hidden; display: flex; flex-direction: column; }
        .head { flex: none; display: flex; align-items: center; gap: 7px; height: 26px; padding: 0 4px 2px; background: #2f2f2f; border-bottom: 1px solid var(--line); font-size: 11px; font-weight: 700; }
        .scroll { width: 16px; padding: 1px 4px 9px; display: flex; }
        .scroll i { flex: 1; border-radius: 4px; background: #575757; }
        .foot { height: 18px; }
      </style>
      <div class="title">
        <ui-icon name="logo" w="24"></ui-icon>
        <ui-tab active><ui-icon slot="icon" name="defaults" w="15"></ui-icon>Details</ui-tab>
        <div class="win">
          <button aria-label="Minimize"><ui-icon name="min" w="12"></ui-icon></button>
          <button aria-label="Maximize"><ui-icon name="max" w="12"></ui-icon></button>
          <button aria-label="Close"><ui-icon name="x" w="12"></ui-icon></button>
        </div>
      </div>
      <div class="find">
        <ui-search icon="x" size="13" value="Mantle Detection Trace"></ui-search>
        <button aria-label="Property matrix"><ui-icon name="table" w="14"></ui-icon></button>
        <button aria-label="Settings"><ui-icon name="gear" w="16"></ui-icon></button>
      </div>
      <div class="frame">
        <div class="rows">
          <div class="head"><ui-icon name="down" w="10" h="6"></ui-icon>Character Movement: Mantling</div>
          <property-row level="0" name="Mantle Detection Trace" changed></property-row>
          ${groups}
          <property-row level="1" name="Clearance Detection" changed></property-row>
          ${CLEARANCE.map(([name, value]) => this.valueRow(name, value)).join('')}
        </div>
        <div class="scroll"><i></i></div>
      </div>
      <div class="foot"></div>`;
  }
}

class BpEditor extends UiElement {
  render() {
    return `
      <style>
        :host { display: flex; flex-direction: column; height: 100vh; position: relative; }
        .top { display: flex; height: 56px; padding-left: 5px; }
        .top > ui-icon { padding-top: 5px; }
        .menus { flex: 1; display: flex; flex-direction: column; justify-content: space-between; }
        nav { display: flex; gap: 24px; padding: 4px 0 0 17px; }
        .assets { display: flex; padding-left: 17px; gap: 1px; }
        .main { flex: 1; min-height: 0; display: flex; gap: 5px; padding: 4px 0 4px 4px; }
        .side { width: 413px; display: flex; flex-direction: column; }
        .center { flex: 1; min-width: 0; display: flex; flex-direction: column; }
        .tabs { display: flex; gap: 2px; height: 25px; }
      </style>
      <div class="top">
        <ui-icon name="logo" w="44"></ui-icon>
        <div class="menus">
          <nav>${['File', 'Edit', 'Asset', 'View', 'Debug', 'Window', 'Tools', 'Help'].map(m => `<button>${m}</button>`).join('')}</nav>
          <div class="assets">
            <ui-tab big><ui-icon slot="icon" name="map" w="16"></ui-icon>ThirdPersonMap</ui-tab>
            <ui-tab big active><ui-icon slot="icon" name="person" w="16" style="color: #0f6cbd"></ui-icon>BP_ThirdPersonCharacter</ui-tab>
          </div>
        </div>
      </div>
      <editor-toolbar></editor-toolbar>
      <div class="main">
        <div class="side"><components-panel></components-panel><blueprint-panel></blueprint-panel></div>
        <div class="center">
          <div class="tabs">
            <ui-tab><ui-icon slot="icon" name="viewport" w="16" h="14"></ui-icon>Viewport</ui-tab>
            <ui-tab><ui-icon slot="icon" name="func" w="16"></ui-icon>Construction Scr…</ui-tab>
            <ui-tab><ui-icon slot="icon" name="func" w="16"></ui-icon>Create Mantle W…</ui-tab>
            <ui-tab><ui-icon slot="icon" name="func" w="16"></ui-icon>Determine Mantl…</ui-tab>
            <ui-tab active><ui-icon slot="icon" name="graph" w="16"></ui-icon>Event Graph</ui-tab>
          </div>
          <event-graph></event-graph>
          <compiler-results></compiler-results>
        </div>
      </div>
      <status-bar></status-bar>
      <details-window></details-window>`;
  }
}

customElements.define('ui-icon', UiIcon);
customElements.define('ui-tab', UiTab);
customElements.define('ui-tool', UiTool);
customElements.define('ui-search', UiSearch);
customElements.define('ui-add', UiAdd);
customElements.define('tree-row', TreeRow);
customElements.define('bp-section', BpSection);
customElements.define('bp-item', BpItem);
customElements.define('components-panel', ComponentsPanel);
customElements.define('blueprint-panel', BlueprintPanel);
customElements.define('node-row', NodeRow);
customElements.define('graph-node', GraphNode);
customElements.define('compact-node', CompactNode);
customElements.define('graph-comment', GraphComment);
customElements.define('event-graph', EventGraph);
customElements.define('compiler-results', CompilerResults);
customElements.define('editor-toolbar', EditorToolbar);
customElements.define('status-bar', StatusBar);
customElements.define('property-row', PropertyRow);
customElements.define('details-window', DetailsWindow);
customElements.define('bp-editor', BpEditor);
</script>
</body>
</html>
